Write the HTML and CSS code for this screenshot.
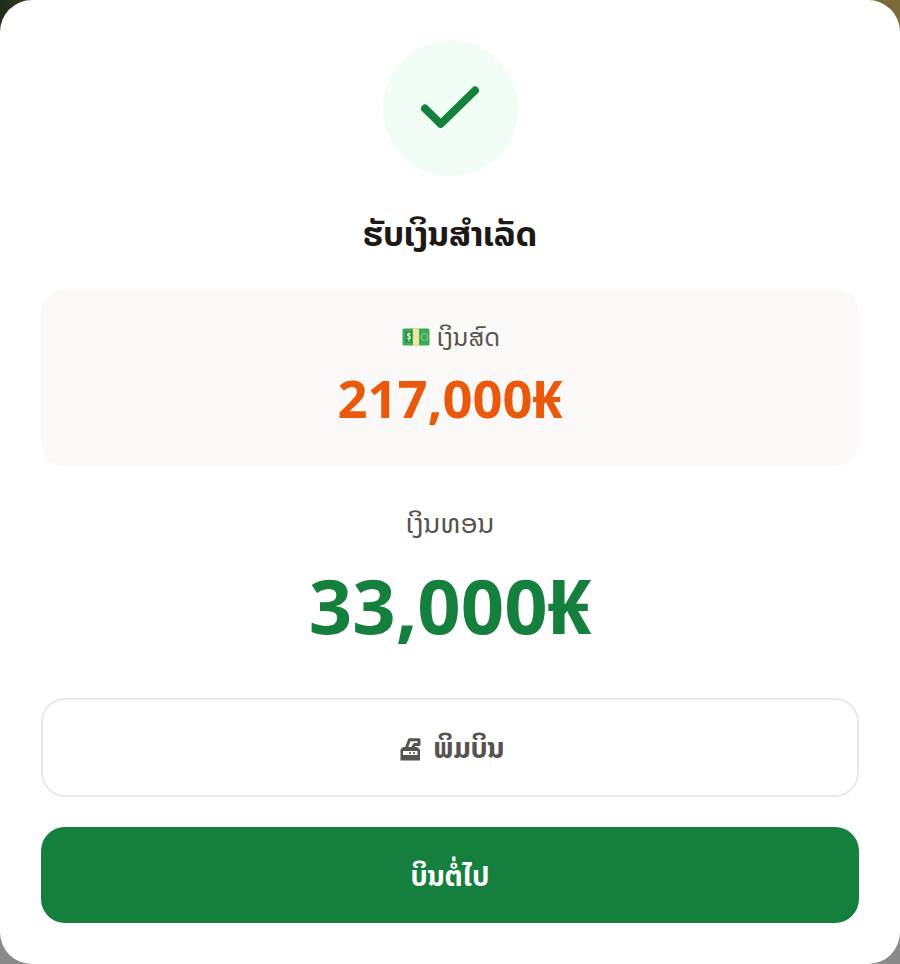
FILE: index.html
```html
<!DOCTYPE html>
<html lang="lo">
<head>
<meta charset="utf-8">
<title>ຮັບເງິນສຳເລັດ</title>
<link rel="stylesheet" href="styles.css">
</head>
<body>
<main class="modal">
  <div class="check-circle">
    <svg class="check-icon" viewBox="0 0 60 48" aria-hidden="true"><path d="M5 23.5 L20.7 39 L55 5.5"/></svg>
  </div>
  <h1 class="title">ຮັບເງິນສຳເລັດ</h1>
  <section class="cash-card">
    <div class="cash-label">
      <svg class="money-icon" viewBox="0 0 28 20" aria-hidden="true">
        <rect x="0.5" y="1.5" width="27" height="17" rx="1.5" fill="#3dab58"/>
        <rect x="3" y="4" width="7" height="12" rx="1" fill="#2f9449"/>
        <path d="M8.4 7.2c-.4-.8-2.9-1-2.9.6 0 1.800 3 1 3 2.700 0 1.500-2.600 1.400-3.200.5M7 5.400v9.200" fill="none" stroke="#c9f2cf" stroke-width="1.100"/>
        <circle cx="22.500" cy="10" r="3.500" fill="none" stroke="#7fd08f" stroke-width="1"/>
        <rect x="11" y="1.500" width="6" height="17" fill="#f5e3a0"/>
      </svg>
      <span>ເງິນສົດ</span>
    </div>
    <div class="cash-value">217,000₭</div>
  </section>
  <div class="change-label">ເງິນທອນ</div>
  <div class="change-value">33,000₭</div>
  <button class="btn btn-outline">
    <svg class="print-icon" viewBox="0 0 28 28" aria-hidden="true">
      <path d="M10.500 13.500 L13.500 5.800 H23 V10.500 H18.500 L16.800 13.500" fill="none" stroke="#57534e" stroke-width="3" stroke-linejoin="round"/>
      <path d="M7 13H21L24 15.500V26.500H4.500V15.500Z" fill="#57534e"/>
      <rect x="7" y="17" width="14.500" height="4" fill="#fff"/>
      <rect x="13" y="18.200" width="2" height="1.600" fill="#57534e"/>
      <rect x="17" y="18.200" width="2" height="1.600" fill="#57534e"/>
    </svg>
    <span>ພິມບິນ</span>
  </button>
  <button class="btn btn-primary">ບິນຕໍ່ໄປ</button>
</main>
</body>
</html>
```
FILE: styles.css
```css
* { box-sizing: border-box; }
html, body { margin: 0; height: 100%; }
body {
  width: 900px;
  height: 964px;
  overflow: hidden;
  background:
    linear-gradient(90deg, #1f2a1a 0, #3c4a2a 40px, #8a8a8a 41px, #8a8a8a 859px, #7a6a3a 860px) top / 100% 40px no-repeat,
    #8a8a8a;
  font-family: "Noto Sans", "Noto Sans Lao", "DejaVu Sans", sans-serif;
}
.modal {
  width: 900px;
  height: 964px;
  background: #fff;
  border-radius: 32px;
  padding: 41px 41px 0;
  display: flex;
  flex-direction: column;
  align-items: center;
}
.check-circle {
  width: 135px;
  height: 135px;
  border-radius: 50%;
  background: #f0fdf4;
  display: flex;
  align-items: center;
  justify-content: center;
}
.check-icon {
  width: 60px;
  height: 48px;
  fill: none;
  stroke: #15803d;
  stroke-width: 8;
  stroke-linecap: round;
  stroke-linejoin: round;
}
.title {
  margin: 34px 0 0;
  height: 46px;
  line-height: 46px;
  font-size: 34px;
  font-weight: 700;
  color: #1c1917;
}
.cash-card {
  width: 818px;
  height: 176px;
  margin-top: 34px;
  background: #fbf9f7;
  border-radius: 22px;
  display: flex;
  flex-direction: column;
  align-items: center;
  padding-top: 28px;
}
.cash-label {
  display: flex;
  align-items: center;
  gap: 7px;
  height: 38px;
  padding-left: 2px;
  font-size: 25px;
  color: #57534e;
}
.money-icon { width: 28px; height: 20px; }
.cash-value {
  margin-top: 8px;
  height: 68px;
  line-height: 68px;
  font-size: 52.5px;
  font-weight: 700;
  color: #ea580c;
}
.change-label {
  margin-top: 35px;
  height: 44px;
  line-height: 44px;
  font-size: 27.5px;
  color: #57534e;
}
.change-value {
  margin-top: 12px;
  height: 96px;
  line-height: 96px;
  font-size: 76px;
  font-weight: 700;
  color: #15803d;
}
.btn {
  width: 818px;
  font-family: inherit;
  font-weight: 700;
  font-size: 27.5px;
  border-radius: 24px;
  display: flex;
  align-items: center;
  justify-content: center;
  gap: 10px;
  padding: 0;
}
.btn-outline {
  margin-top: 45px;
  height: 99px;
  background: #fff;
  border: 2px solid #ebe9e8;
  color: #57534e;
}
.print-icon { width: 28px; height: 28px; }
.btn-primary {
  margin-top: 30px;
  height: 96px;
  padding-top: 1px;
  background: #15803d;
  border: 0;
  color: #fff;
}
```
